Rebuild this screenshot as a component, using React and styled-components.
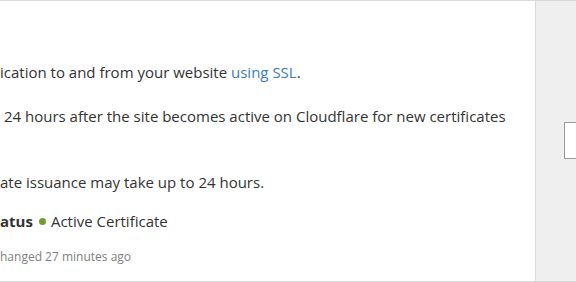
import React from 'react';
import styled, { createGlobalStyle } from 'styled-components';

const GlobalStyle = createGlobalStyle`
  html, body {
    margin: 0;
    padding: 0;
    background: #ffffff;
  }
  body {
    font-family: "Open Sans", "Liberation Sans", sans-serif;
    color: #333333;
    overflow: hidden;
  }
`;

const Card = styled.section`
  width: 576px;
  height: 282px;
  box-sizing: border-box;
  border-top: 1px solid #d9d9d9;
  border-bottom: 1px solid #d9d9d9;
  display: grid;
  grid-template-columns: 535px 1fr;
  overflow: hidden;
`;

const Body = styled.div`
  background: #ffffff;
  padding-top: 60px;
  font-size: 15px;
  line-height: 22px;
  overflow: hidden;
  white-space: nowrap;
`;

const Para = styled.p`
  margin: 0 0 ${p => p.$gap || 22}px 0;
`;

const Link = styled.a`
  color: #3a7cbd;
  text-decoration: none;
`;

const StatusRow = styled.div`
  display: flex;
  align-items: center;
  gap: 5px;
  margin-bottom: 14px;
`;

const Label = styled.strong`
  font-weight: 700;
  color: #333333;
  margin-right: 1px;
`;

const Dot = styled.span`
  width: 7px;
  height: 7px;
  border-radius: 50%;
  background: #6f9e2c;
  display: inline-block;
`;

const Meta = styled.div`
  font-size: 12px;
  color: #808080;
`;

const Side = styled.aside`
  background: #efefef;
  border-left: 1px solid #d9d9d9;
  padding: 121px 0 0 28px;
`;

const Control = styled.div`
  height: 37px;
  width: 120px;
  box-sizing: border-box;
  background: #ffffff;
  border: 1px solid #999999;
`;

export default function App() {
  return (
    <>
      <GlobalStyle />
      <Card>
        <Body>
          <Para>ication to and from your website <Link href="#">using SSL</Link>.</Para>
          <Para $gap={44}>{'\u00a0'}24 hours after the site becomes active on Cloudflare for new certificates</Para>
          <Para $gap={17}>ate issuance may take up to 24 hours.</Para>
          <StatusRow>
            <Label>atus</Label>
            <Dot />
            <span>Active Certificate</span>
          </StatusRow>
          <Meta>hanged 27 minutes ago</Meta>
        </Body>
        <Side>
          <Control />
        </Side>
      </Card>
    </>
  );
}
